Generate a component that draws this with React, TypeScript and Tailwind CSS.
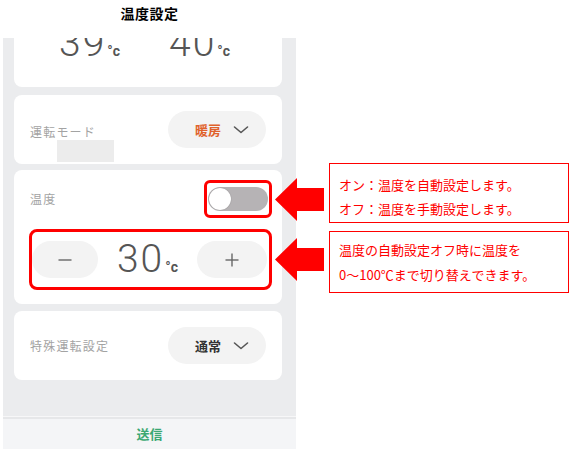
import React from "react";

const jp = { fontFamily: '"Noto Sans CJK JP", "Noto Sans", sans-serif' };
const num = { fontFamily: 'Roboto, "Noto Sans", sans-serif' };

function Chevron() {
  return (
    <svg width="16" height="10" viewBox="0 0 16 10" fill="none">
      <path d="M1.5 2 L8 7.5 L14.5 2" stroke="#555" strokeWidth="1.6" strokeLinecap="round" strokeLinejoin="round" />
    </svg>
  );
}

function Arrow({ top }: { top: number }) {
  return (
    <svg
      className="absolute"
      style={{ left: 275, top }}
      width="49"
      height="43"
      viewBox="0 0 49 43"
    >
      <polygon points="0,21.5 22,0 22,10 49,10 49,33 22,33 22,43" fill="#ff0000" />
    </svg>
  );
}

function Minus() {
  return (
    <svg width="14" height="14" viewBox="0 0 14 14">
      <line x1="0.5" y1="7" x2="13.5" y2="7" stroke="#666" strokeWidth="1.4" />
    </svg>
  );
}

function Plus() {
  return (
    <svg width="14" height="14" viewBox="0 0 14 14">
      <line x1="0.5" y1="7" x2="13.5" y2="7" stroke="#666" strokeWidth="1.4" />
      <line x1="7" y1="0.5" x2="7" y2="13.5" stroke="#666" strokeWidth="1.4" />
    </svg>
  );
}

export default function App() {
  return (
    <div className="relative w-[573px] h-[449px] bg-white overflow-hidden" style={jp}>
      <div className="absolute left-[3px] top-0 w-[293px] h-[449px] flex flex-col">
        {/* title */}
        <div className="h-[38px] flex items-start justify-center pt-[3px] bg-white">
          <span className="text-[14px] font-bold text-black tracking-[0.5px]">温度設定</span>
        </div>
        {/* screen */}
        <div className="flex-1 bg-[#ebecee] overflow-hidden flex flex-col">
          <div className="flex-1 flex flex-col px-[11px]">
            {/* card 1 (scrolled) */}
            <div className="w-[268px] h-[49px] bg-white rounded-b-[8px] overflow-hidden relative shrink-0">
              <div className="absolute left-0 right-0 top-[-14px] flex">
                <div className="flex items-baseline ml-[45px]" style={num}>
                  <span className="text-[39px] font-light text-[#555] leading-none tracking-[2px]">39</span>
                  <span className="text-[14px] font-bold text-[#555] ml-[1px]">°c</span>
                </div>
                <div className="flex items-baseline ml-[49px]" style={num}>
                  <span className="text-[39px] font-light text-[#555] leading-none tracking-[2px]">40</span>
                  <span className="text-[14px] font-bold text-[#555] ml-[1px]">°c</span>
                </div>
              </div>
            </div>
            {/* card 2 */}
            <div className="mt-[8px] w-[268px] h-[69px] bg-white rounded-[8px] flex items-center justify-between pl-[16px] pr-[16px] shrink-0">
              <div className="relative">
                <span className="text-[12px] text-[#a3a3a3] tracking-[1.2px]">運転モード</span>
                <div className="absolute left-[27px] top-[22px] w-[57px] h-[22px] bg-[#ececec]" />
              </div>
              <div className="w-[98px] h-[37px] rounded-full bg-[#f3f3f3] flex items-center pl-[27px] gap-[12px]">
                <span className="text-[13px] font-bold text-[#e0622c]">暖房</span>
                <Chevron />
              </div>
            </div>
            {/* card 3 */}
            <div className="mt-[6px] w-[268px] h-[134px] bg-white rounded-[8px] flex flex-col shrink-0">
              <div className="flex items-center justify-between pl-[16px] pr-[10px] pt-[10px]">
                <span className="text-[12px] text-[#a3a3a3] tracking-[1.2px]">温度</span>
                <div className="w-[68px] h-[38px] border-[3px] border-[#ff0000] rounded-[6px] flex items-center justify-center">
                  <div className="w-[60px] h-[24px] rounded-full bg-[#b6b3b5] relative">
                    <div className="absolute left-[1px] top-[1px] w-[22px] h-[22px] rounded-full bg-white shadow-[0_0_1px_rgba(0,0,0,0.4)]" />
                  </div>
                </div>
              </div>
              <div className="mt-[11px] ml-[15px] w-[243px] h-[61px] border-[3px] border-[#ff0000] rounded-[8px] flex items-center justify-between pl-[0px] pr-[2px]">
                <div className="w-[66px] h-[37px] rounded-full bg-[#f3f3f3] flex items-center justify-center">
                  <Minus />
                </div>
                <div className="flex items-baseline ml-[12px]" style={num}>
                  <span className="text-[39px] font-light text-[#555] leading-none tracking-[2px]">30</span>
                  <span className="text-[14px] font-bold text-[#555] ml-[1px]">°c</span>
                </div>
                <div className="w-[70px] h-[37px] rounded-full bg-[#f3f3f3] flex items-center justify-center ml-[12px]">
                  <Plus />
                </div>
              </div>
            </div>
            {/* card 4 */}
            <div className="mt-[7px] w-[268px] h-[69px] bg-white rounded-[8px] flex items-center justify-between pl-[16px] pr-[16px] shrink-0">
              <span className="text-[12px] text-[#a3a3a3] tracking-[1.2px]">特殊運転設定</span>
              <div className="w-[98px] h-[37px] rounded-full bg-[#f3f3f3] flex items-center pl-[27px] gap-[12px]">
                <span className="text-[13px] font-bold text-[#333]">通常</span>
                <Chevron />
              </div>
            </div>
          </div>
          {/* bottom bar */}
          <div className="h-[33px] shrink-0 border-t border-[#f7f7f8] flex flex-col">
            <div className="h-[2px] bg-[#e6e7e9]" />
            <div className="flex-1 bg-[#f4f5f7] flex items-center justify-center">
              <span className="text-[13px] font-bold text-[#3aa873]">送信</span>
            </div>
          </div>
        </div>
      </div>

      {/* annotations */}
      <Arrow top={178} />
      <Arrow top={238} />
      <div className="absolute left-[329px] top-[163px] w-[240px] h-[60px] border border-[#ff0000] pl-[9px] pt-[9px] text-[13px] leading-[24px] text-[#ff0000]">
        <div>オン：温度を自動設定します。</div>
        <div>オフ：温度を手動設定します。</div>
      </div>
      <div className="absolute left-[329px] top-[231px] w-[240px] h-[62px] border border-[#ff0000] pl-[9px] pt-[5px] text-[13px] leading-[25px] text-[#ff0000]">
        <div>温度の自動設定オフ時に温度を</div>
        <div>0～100℃まで切り替えできます。</div>
      </div>
    </div>
  );
}
